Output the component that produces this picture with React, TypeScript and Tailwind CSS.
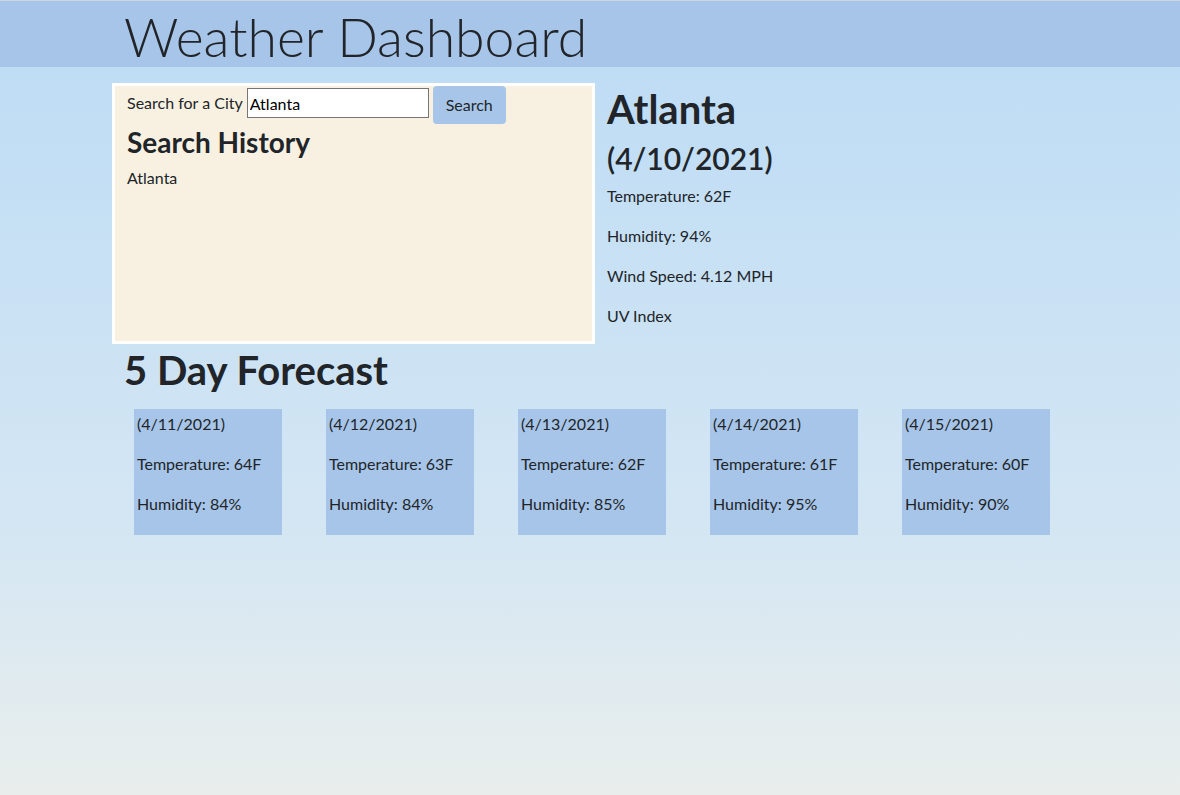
import React from "react";

const forecast = [
  { date: "4/11/2021", temp: 64, humidity: 84 },
  { date: "4/12/2021", temp: 63, humidity: 84 },
  { date: "4/13/2021", temp: 62, humidity: 85 },
  { date: "4/14/2021", temp: 61, humidity: 95 },
  { date: "4/15/2021", temp: 60, humidity: 90 },
];

export default function App() {
  return (
    <div className="min-h-[795px] bg-linear-to-b from-[#bbdbf5] via-[#d6e7f3] via-70% to-[#e9eeec] text-[#212529] font-['Lato','Open_Sans',sans-serif]">
      <header className="h-[67px] border-t border-[#cdd5df] bg-[#a7c5e8]">
        <div className="mx-auto w-[960px] px-[15px]">
          <h1 className="-ml-[1px] pt-[5px] text-[53.5px] font-light leading-[60px] text-[#212529]">
            Weather Dashboard
          </h1>
        </div>
      </header>

      <main className="mx-auto w-[960px]">
        <div className="flex pt-4">
          <section className="ml-[2px] h-[261px] w-[483px] border-[3px] border-white bg-[#f8f1e2] px-3">
            <div className="flex items-start text-[16px]">
              <label className="mr-1 mt-[5px] leading-6">Search for a City</label>
              <input
                className="mt-[2px] h-[30px] w-[182px] border border-[#767676] bg-white px-0.5 text-[16px] text-black outline-none"
                defaultValue="Atlanta"
              />
              <button className="ml-1 h-[38px] w-[73px] rounded bg-[#a7c5e8] text-[16px] text-[#212529]">
                Search
              </button>
            </div>
            <h3 className="mt-[1px] text-[28px] font-bold leading-[34px]">Search History</h3>
            <ul className="mt-[7px] text-[16px] leading-6">
              <li>Atlanta</li>
            </ul>
          </section>

          <section className="ml-3 pt-[2px]">
            <h1 className="text-[40px] font-bold leading-[48px]">Atlanta</h1>
            <h2 className="mt-[6px] text-[30px] font-semibold leading-[38px]">(4/10/2021)</h2>
            <div className="mt-[7px] text-[16px] leading-6">
              <p className="mb-4">Temperature: 62F</p>
              <p className="mb-4">Humidity: 94%</p>
              <p className="mb-4">Wind Speed: 4.12 MPH</p>
              <p>UV Index</p>
            </div>
          </section>
        </div>

        <h1 className="ml-[14px] mt-[2px] text-[40px] font-bold leading-[48px]">5 Day Forecast</h1>

        <div className="ml-6 mt-[15px] flex gap-11">
          {forecast.map((day) => (
            <div key={day.date} className="h-[126px] w-[148px] bg-[#a7c5e8] px-[3px] pt-[3px] text-[16px] leading-6">
              <p className="mb-4">({day.date})</p>
              <p className="mb-4">Temperature: {day.temp}F</p>
              <p>Humidity: {day.humidity}%</p>
            </div>
          ))}
        </div>
      </main>
    </div>
  );
}
